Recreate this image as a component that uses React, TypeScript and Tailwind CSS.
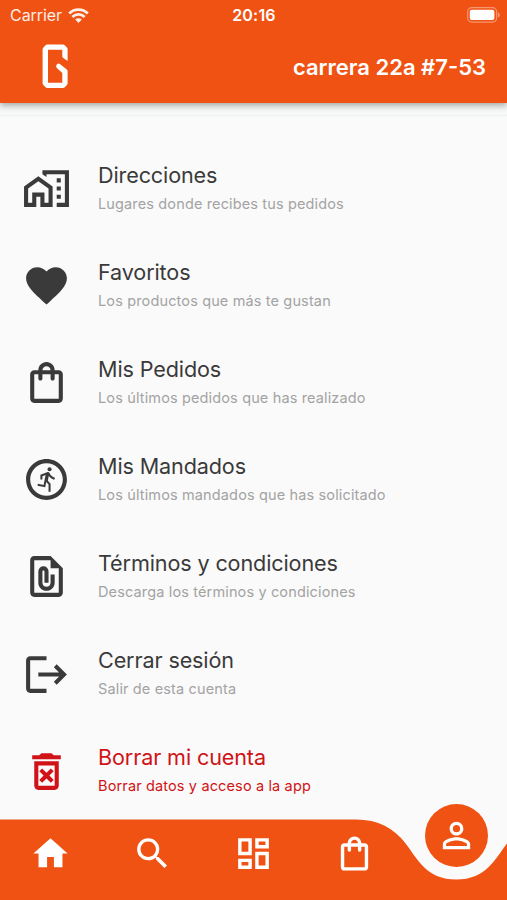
import type { IconType } from 'react-icons';
import {
  MdFavorite,
  MdHome,
  MdLogout,
  MdOutlineDashboard,
  MdOutlineDeleteForever,
  MdOutlineFilePresent,
  MdOutlineHomeWork,
  MdOutlineRunCircle,
  MdOutlineShoppingBag,
  MdPersonOutline,
  MdSearch,
} from 'react-icons/md';

type MenuItem = {
  title: string;
  subtitle: string;
  icon: IconType;
  danger?: boolean;
};

const menu: MenuItem[] = [
  { title: 'Direcciones', subtitle: 'Lugares donde recibes tus pedidos', icon: MdOutlineHomeWork },
  { title: 'Favoritos', subtitle: 'Los productos que más te gustan', icon: MdFavorite },
  { title: 'Mis Pedidos', subtitle: 'Los últimos pedidos que has realizado', icon: MdOutlineShoppingBag },
  { title: 'Mis Mandados', subtitle: 'Los últimos mandados que has solicitado', icon: MdOutlineRunCircle },
  { title: 'Términos y condiciones', subtitle: 'Descarga los términos y condiciones', icon: MdOutlineFilePresent },
  { title: 'Cerrar sesión', subtitle: 'Salir de esta cuenta', icon: MdLogout },
  { title: 'Borrar mi cuenta', subtitle: 'Borrar datos y acceso a la app', icon: MdOutlineDeleteForever, danger: true },
];

const tabs: IconType[] = [MdHome, MdSearch, MdOutlineDashboard, MdOutlineShoppingBag];

function WifiIcon() {
  return (
    <svg className="w-[21px] h-[15px]" viewBox="0 0 21 15" fill="none" stroke="#fff" strokeWidth="2.8">
      <path d="M1.2 5.4a13.2 13.2 0 0 1 18.6 0" />
      <path d="M4.4 8.9a8.6 8.6 0 0 1 12.2 0" />
      <path d="M10.5 14.9 7.2 11.6a4.7 4.7 0 0 1 6.6 0z" fill="#fff" stroke="none" />
    </svg>
  );
}

function BatteryIcon() {
  return (
    <svg className="w-[33px] h-[16px]" viewBox="0 0 33 16" fill="none">
      <rect x="0.7" y="0.7" width="29" height="14.4" rx="4.2" stroke="#fff" strokeOpacity="0.4" strokeWidth="1.2" />
      <rect x="2.8" y="2.7" width="24.6" height="10.4" rx="2" fill="#fff" />
      <path d="M31.2 5.6c1.9.6 1.9 4 0 4.6z" fill="#fff" fillOpacity="0.5" />
    </svg>
  );
}

function Logo() {
  return (
    <svg className="w-[27px] h-[45px]" viewBox="0 0 27 45" fill="#fff">
      <path d="M25.600 17V5.200Q25.600 4.200 24.900 3.500L23 1.400Q22.100.5 20.900.5H5.300Q4.100.5 3.300 1.400L1.400 3.400Q.6 4.200.6 5.400V39.200Q.6 40.300 1.400 41.100L3.300 43.100Q4.100 44 5.300 44H20.900Q22.100 44 23 43.100L24.900 41.100Q25.600 40.300 25.600 39.200V27Q25.600 26 24.800 25.400L18.200 20.200Q16.400 18.900 14.800 20.500Q13.200 22.300 14.800 24.100L20.300 29V38.800H6V5.800H20.300V12.300Q20.300 13.200 21 13.700Z" />
    </svg>
  );
}

function Header() {
  return (
    <header className="relative h-[103px] bg-[#f05213] text-white shadow-[0_3px_6px_rgba(0,0,0,0.3)]">
      <div className="grid h-[30px] grid-cols-3 items-center px-[10px] text-base">
        <div className="flex items-center gap-[6px] tracking-[-0.05px] opacity-90">
          Carrier
          <WifiIcon />
        </div>
        <span className="pl-px text-center font-semibold tracking-[0.2px]">20:16</span>
        <div className="-mr-[3px] flex justify-end">
          <BatteryIcon />
        </div>
      </div>
      <div className="flex h-[73px] items-center justify-between pl-[42px] pr-[21px]">
        <Logo />
        <span className="mt-[2px] text-[22px] font-semibold">carrera 22a #7-53</span>
      </div>
    </header>
  );
}

function MenuRow({ title, subtitle, icon: Icon, danger }: MenuItem) {
  return (
    <li className={`flex h-[97.1px] items-center pl-[22px] ${danger ? 'text-[#d01316]' : 'text-[#3a3a3a]'}`}>
      <Icon className="size-[49px] shrink-0" />
      <div className="mb-[1.4px] ml-[27px] flex flex-col">
        <span className="text-[21.6px] leading-[28px] tracking-[-0.13px]">{title}</span>
        <span className={`mt-[4px] text-[14.5px] leading-[22px] tracking-[0.14px] ${danger ? '' : 'text-[#a3a3a3]'}`}>
          {subtitle}
        </span>
      </div>
    </li>
  );
}

function BottomNav() {
  return (
    <nav className="absolute bottom-0 left-0 h-[81px] w-full">
      <svg className="absolute inset-0 h-full w-full" viewBox="0 0 507 81">
        <path
          d="M0 .5H356C378 .5 394 9 406 25C418 41 427 60.5 456.300 60.5S494.600 41 506.600 25L507 24.500V81H0z"
          fill="#f05213"
        />
      </svg>
      <div className="relative grid auto-rows-[68px] grid-cols-5 place-items-center text-white">
        {tabs.map((Tab, i) => (
          <Tab key={i} className="size-[41px]" />
        ))}
        {/* active tab floats in the notch of the bar */}
        <span className="flex size-[63px] -translate-y-[18px] items-center justify-center rounded-full bg-[#f05213]">
          <MdPersonOutline className="size-[41px]" />
        </span>
      </div>
    </nav>
  );
}

export default function App() {
  return (
    <div className="relative h-[900px] w-full overflow-hidden bg-[#fafafa] font-['Inter','Liberation_Sans',sans-serif]">
      <Header />
      <div className="h-[13px] border-b border-[#eeeff0] bg-[#f7f8f8]" />
      <ul className="pt-[24px]">
        {menu.map((item) => (
          <MenuRow key={item.title} {...item} />
        ))}
      </ul>
      <BottomNav />
    </div>
  );
}
